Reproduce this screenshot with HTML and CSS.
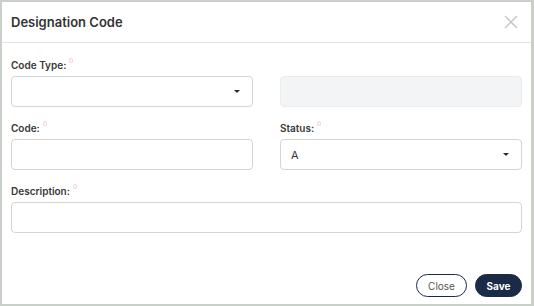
FILE: index.html
```html
<!DOCTYPE html>
<html lang="en">
<head>
  <meta charset="UTF-8">
  <meta name="viewport" content="width=device-width, initial-scale=1.0">
  <title>Designation Code</title>
  <link rel="stylesheet" href="styles.css">
</head>
<body>
  <div class="modal">
    <div class="modal-header">
      <h3>Designation Code</h3>
      <button class="close-x" type="button" aria-label="Close">
        <svg width="14" height="14" viewBox="0 0 14 14">
          <path d="M1 1 L13 13 M13 1 L1 13" stroke="#c4c4c4" stroke-width="1.4" fill="none"/>
        </svg>
      </button>
    </div>
    <form class="modal-body">
      <div class="form-grid">
        <div class="form-group">
          <label>Code Type:<span class="req"></span></label>
          <div class="select"><span class="value"></span><span class="caret"></span></div>
        </div>
        <div class="form-group">
          <label class="blank">&nbsp;</label>
          <div class="input disabled"></div>
        </div>
        <div class="form-group">
          <label>Code:<span class="req"></span></label>
          <div class="input"></div>
        </div>
        <div class="form-group">
          <label>Status:<span class="req"></span></label>
          <div class="select"><span class="value">A</span><span class="caret"></span></div>
        </div>
        <div class="form-group wide">
          <label>Description:<span class="req"></span></label>
          <div class="input"></div>
        </div>
      </div>
      <div class="modal-footer">
        <button type="button" class="btn btn-outline">Close</button>
        <button type="submit" class="btn btn-primary">Save</button>
      </div>
    </form>
  </div>
</body>
</html>
```

FILE: styles.css
```css
body {
  margin: 0;
  font-family: Inter, "Liberation Sans", Arial, sans-serif;
  background-color: #c9d0c9;
  width: 534px;
  height: 306px;
  padding: 2px 2px 2px 2px;
  box-sizing: border-box;
}
.modal {
  background-color: #fff;
  width: 529px;
  height: 302px;
  display: flex;
  flex-direction: column;
}
.modal-header {
  height: 40px;
  border-bottom: 1px solid #e3e3e3;
  display: flex;
  align-items: center;
  justify-content: space-between;
  padding: 0 13px 0 9px;
}
.modal-header h3 {
  margin: 0;
  font-size: 13px;
  font-weight: 600;
  color: #333;
}
.close-x {
  background: none;
  border: none;
  padding: 0;
  display: flex;
  cursor: pointer;
}
.modal-body {
  flex: 1;
  display: flex;
  flex-direction: column;
  padding: 16px 9px 7px 9px;
}
.form-grid {
  display: grid;
  grid-template-columns: 242px 242px;
  column-gap: 27px;
  row-gap: 15px;
}
.form-group.wide {
  grid-column: 1 / 3;
}
label {
  display: block;
  font-size: 10px;
  font-weight: 600;
  color: #383838;
  height: 12px;
  line-height: 12px;
  margin-bottom: 5px;
}
.req {
  display: inline-block;
  width: 2px;
  height: 3px;
  border: 1px solid #f8d0d6;
  border-radius: 50%;
  margin-left: 3px;
  vertical-align: top;
  margin-top: -1px;
}
.input, .select {
  height: 31px;
  border: 1px solid #d4d4d4;
  border-radius: 4px;
  box-sizing: border-box;
  background: #fff;
}
.input.disabled {
  background-color: #f3f4f6;
  border-color: #ececec;
}
.select {
  display: flex;
  align-items: center;
  justify-content: space-between;
  padding: 0 12px 0 10px;
  font-size: 11px;
  color: #333;
}
.caret {
  width: 0;
  height: 0;
  border-left: 3.5px solid transparent;
  border-right: 3.5px solid transparent;
  border-top: 3.5px solid #2b2b2b;
}
.modal-footer {
  margin-top: auto;
  display: flex;
  justify-content: flex-end;
  gap: 8px;
}
.btn {
  height: 23px;
  border-radius: 12px;
  font-family: Inter, "Liberation Sans", Arial, sans-serif;
  font-size: 10px;
  cursor: pointer;
  padding: 0;
}
.btn-outline {
  width: 51px;
  background: #fff;
  border: 1px solid #1b2a47;
  color: #555;
}
.btn-primary {
  width: 47px;
  background-color: #1b2a47;
  border: 1px solid #1b2a47;
  color: #fff;
  font-weight: 700;
}
```
